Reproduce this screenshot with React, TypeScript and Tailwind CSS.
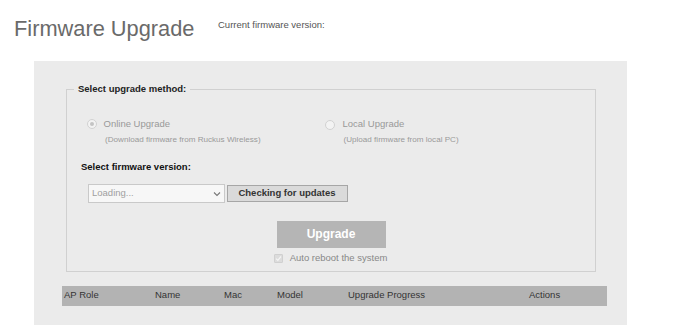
import React from "react";

function Radio({ checked }: { checked?: boolean }) {
  return (
    <div className="w-[10px] h-[10px] rounded-full border border-[#d2d2d2] bg-[#f3f3f3] flex items-center justify-center shrink-0">
      {checked && <div className="w-[4px] h-[4px] rounded-full bg-[#c4c4c4]" />}
    </div>
  );
}

export default function App() {
  return (
    <div
      className="w-[680px] h-[336px] bg-white overflow-hidden"
      style={{ fontFamily: '"Liberation Sans", Arial, sans-serif' }}
    >
      <div className="flex items-start pt-[16px] pl-[14px]">
        <h1 className="w-[204px] text-[21.8px] leading-[25px] text-[#6a6a6a] font-normal">
          Firmware Upgrade
        </h1>
        <span className="mt-[3px] text-[9.5px] leading-[12px] text-[#555]">
          Current firmware version:
        </span>
      </div>

      <div className="ml-[34px] mt-[20px] w-[593px] h-[264px] bg-[#ebebeb] pt-[22px] pl-[28px]">
        <fieldset className="ml-[4px] w-[530px] border border-[#d0d0d0] pl-[14px] pb-[7px]">
          <legend className="ml-[-7px] px-[4px] text-[9.5px] leading-[12px] font-bold text-[#222]">
            Select upgrade method:
          </legend>

          <div className="mt-[23px] flex ml-[6px]">
            <div className="w-[238px] flex items-start">
              <div className="mt-[1px]">
                <Radio checked />
              </div>
              <div className="ml-[6.5px]">
                <div className="text-[9.5px] leading-[12px] text-[#999]">Online Upgrade</div>
                <div className="mt-[4px] pl-[1.5px] text-[8.1px] leading-[11px] text-[#9a9a9a]">
                  (Download firmware from Ruckus Wireless)
                </div>
              </div>
            </div>
            <div className="flex items-start">
              <div className="mt-[1.5px]">
                <Radio />
              </div>
              <div className="ml-[7.5px]">
                <div className="text-[9.5px] leading-[12px] text-[#999]">Local Upgrade</div>
                <div className="mt-[4px] pl-[1px] text-[8.1px] leading-[11px] text-[#9a9a9a]">
                  (Upload firmware from local PC)
                </div>
              </div>
            </div>
          </div>

          <div className="mt-[16px] text-[9.5px] leading-[12px] font-bold text-[#111]">
            Select firmware version:
          </div>

          <div className="mt-[11px] ml-[7px] flex items-center">
            <div className="w-[137px] h-[19px] border border-[#c9c9c9] bg-[#f7f7f7] flex items-center justify-between pl-[3px] pr-[3px]">
              <span className="text-[9.5px] text-[#a0a0a0]">Loading...</span>
              <svg width="8" height="6" viewBox="0 0 8 6" className="mt-[1px]">
                <path d="M1 1.5 L4 4.5 L7 1.5" stroke="#777" strokeWidth="1.1" fill="none" />
              </svg>
            </div>
            <div className="ml-[1.5px] w-[121px] h-[17px] border border-[#a6a6a6] bg-[#dadada] flex items-center justify-center text-[9.5px] font-bold text-[#333]">
              Checking for updates
            </div>
          </div>

          <div className="mt-[17.5px] flex justify-center pr-[14px]">
            <div className="w-[109px] h-[27px] bg-[#b5b5b5] flex items-center justify-center text-[12px] font-bold text-white">
              Upgrade
            </div>
          </div>

          <div className="mt-[4.5px] flex justify-center items-center pr-[15px]">
            <div className="w-[9px] h-[9px] bg-[#dcdcdc] border border-[#d0d0d0] rounded-[1px] flex items-center justify-center">
              <svg width="7" height="7" viewBox="0 0 7 7">
                <path d="M1 3.6 L2.8 5.3 L6 1.5" stroke="#f4f4f4" strokeWidth="1.2" fill="none" />
              </svg>
            </div>
            <span className="ml-[7px] text-[9.5px] leading-[12px] text-[#888]">
              Auto reboot the system
            </span>
          </div>
        </fieldset>

        <div className="mt-[13.5px] w-[545px] h-[20px] bg-[#b3b3b3] pl-[2px] grid grid-cols-[91px_69px_53px_71px_181px_1fr] items-center text-[9.5px] text-[#333]">
          <span>AP Role</span>
          <span>Name</span>
          <span>Mac</span>
          <span>Model</span>
          <span>Upgrade Progress</span>
          <span>Actions</span>
        </div>
      </div>
    </div>
  );
}
